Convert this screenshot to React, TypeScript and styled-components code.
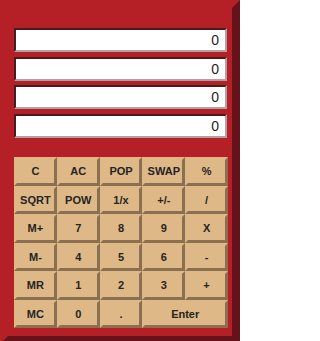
import React from "react";
import styled, { createGlobalStyle } from "styled-components";

const Global = createGlobalStyle`
  html, body {
    margin: 0;
    padding: 0;
    overflow: hidden;
    background: #ffffff;
  }
  * { box-sizing: border-box; }
`;

const Calculator = styled.div`
  width: 240px;
  background: #b42025;
  border-style: solid;
  border-width: 8px;
  border-color: #b42025 #66121a #66121a #b42025;
  padding: 20px 4px 8px 6px;
  display: flex;
  flex-direction: column;
  gap: 19.5px;
  font-family: "Liberation Sans", Arial, sans-serif;
`;

const Displays = styled.div`
  display: flex;
  flex-direction: column;
  gap: 4.5px;
  padding-right: 1px;
`;

const Display = styled.div`
  height: 24px;
  background: #ffffff;
  border-style: solid;
  border-width: 2px;
  border-color: #4a1a1c #b4a0a2 #b4a0a2 #4a1a1c;
  display: flex;
  align-items: center;
  justify-content: flex-end;
  padding-right: 6px;
  font-size: 14px;
  color: #1e1e1e;
`;

const Keypad = styled.div`
  display: grid;
  grid-template-columns: repeat(5, 1fr);
  grid-auto-rows: 28.5px;
`;

const Key = styled.button<{ $span?: number }>`
  grid-column: span ${(p) => p.$span ?? 1};
  margin: 0;
  padding: 0;
  background: #deb887;
  border-style: solid;
  border-width: 3px;
  border-color: #deb887 #8a7050 #8a7050 #deb887;
  font-family: "Liberation Sans", Arial, sans-serif;
  font-size: 11px;
  font-weight: bold;
  color: #242424;
  display: flex;
  align-items: center;
  justify-content: center;
  cursor: pointer;
`;

const keys: { label: string; span?: number }[] = [
  { label: "C" }, { label: "AC" }, { label: "POP" }, { label: "SWAP" }, { label: "%" },
  { label: "SQRT" }, { label: "POW" }, { label: "1/x" }, { label: "+/-" }, { label: "/" },
  { label: "M+" }, { label: "7" }, { label: "8" }, { label: "9" }, { label: "X" },
  { label: "M-" }, { label: "4" }, { label: "5" }, { label: "6" }, { label: "-" },
  { label: "MR" }, { label: "1" }, { label: "2" }, { label: "3" }, { label: "+" },
  { label: "MC" }, { label: "0" }, { label: "." }, { label: "Enter", span: 2 },
];

export default function App() {
  const stack = ["0", "0", "0", "0"];
  return (
    <>
      <Global />
      <Calculator>
        <Displays>
          {stack.map((v, i) => (
            <Display key={i}>{v}</Display>
          ))}
        </Displays>
        <Keypad>
          {keys.map((k) => (
            <Key key={k.label} $span={k.span}>
              {k.label}
            </Key>
          ))}
        </Keypad>
      </Calculator>
    </>
  );
}
